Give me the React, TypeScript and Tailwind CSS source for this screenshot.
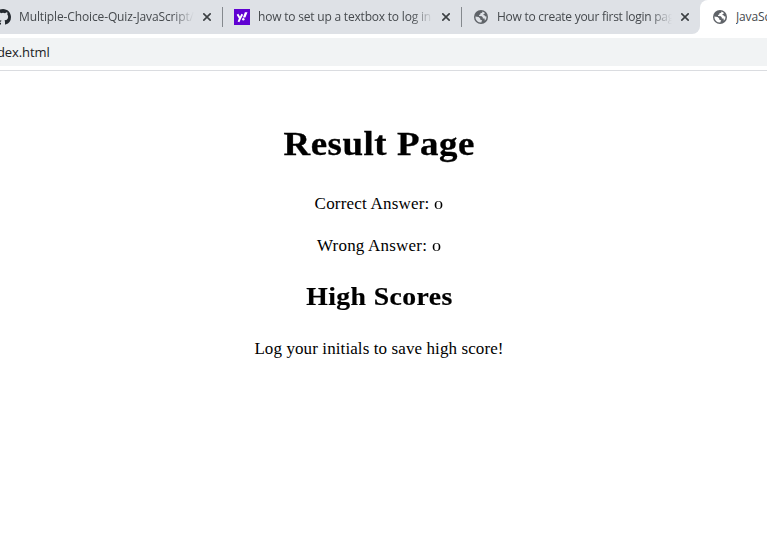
import React from "react";

function Globe({ land }: { land: string }) {
  return (
    <svg viewBox="0 0 14 14" className="h-[14px] w-[14px] shrink-0">
      <circle cx="7" cy="7" r="7" fill="#5f6368" />
      <path
        d="M8.4 1.5 8.2 2.7 6.4 3.3 6.3 4.6 5 5 5.2 6.1 7.7 6.2 8.7 7.2 8.8 8.4 10.6 8.6 10.8 10.8A5.7 5.7 0 0 0 12.6 6.4L11.6 6.6 10.8 5.5 9.4 5.1 9.6 4.1 11 3.6 10.4 2.4ZM1.4 6.5 4.6 6.9 6.2 8.4 6.2 9.5 8.2 10.4 7.6 11.5 7.4 12.6A5.6 5.6 0 0 1 1.4 6.5Z"
        fill={land}
      />
    </svg>
  );
}

function GitHub() {
  return (
    <svg viewBox="0 0 16 16" className="h-4 w-4 shrink-0" fill="#24292f">
      <path d="M8 0C3.58 0 0 3.58 0 8c0 3.54 2.29 6.53 5.47 7.59.4.07.55-.17.55-.38 0-.19-.01-.82-.01-1.49-2.01.37-2.53-.49-2.69-.94-.09-.23-.48-.94-.82-1.13-.28-.15-.68-.52-.01-.53.63-.01 1.08.58 1.23.82.72 1.21 1.87.87 2.33.66.07-.52.28-.87.51-1.07-1.78-.2-3.64-.89-3.64-3.95 0-.87.31-1.59.82-2.15-.08-.2-.36-1.02.08-2.12 0 0 .67-.21 2.2.82a7.6 7.6 0 0 1 4 0c1.53-1.04 2.2-.82 2.2-.82.44 1.1.16 1.92.08 2.12.51.56.82 1.27.82 2.15 0 3.07-1.87 3.75-3.65 3.95.29.25.54.73.54 1.48 0 1.07-.01 1.93-.01 2.2 0 .21.15.46.55.38A8 8 0 0 0 16 8c0-4.42-3.58-8-8-8Z" />
    </svg>
  );
}

function Yahoo() {
  return (
    <svg viewBox="0 0 16 16" className="h-4 w-4 shrink-0">
      <path fill="#6001d2" d="M0 0h16v16H0z" />
      <path
        d="M3.5 5.3 6 9.6 8.3 5.3M6 9.5 4.5 12.8"
        fill="none"
        stroke="#fff"
        strokeWidth="1.9"
      />
      <path d="M10.9 3.2h2.6l-2.1 5.2H8.9Z" fill="#fff" />
      <circle cx="9.3" cy="10.3" r="1.2" fill="#fff" />
    </svg>
  );
}

function Close() {
  return (
    <svg viewBox="0 0 8 8" className="h-2 w-2 shrink-0">
      <path d="M.3.3l7.4 7.4M7.7.3L.3 7.7" stroke="#3c4043" strokeWidth="1.6" />
    </svg>
  );
}

const label =
  "shrink-0 overflow-hidden whitespace-nowrap font-['Open_Sans','Noto_Sans',sans-serif] text-[12px] leading-[18px] text-[#45494d]";
const fade = "[mask-image:linear-gradient(to_right,#000_calc(100%-22px),transparent)]";

const zero =
  "inline-block origin-left scale-x-[1.45] text-[12.5px] leading-5";

export default function App() {
  return (
    <div className="h-[535px] w-[767px] overflow-hidden bg-white">
      <header className="border-b border-[#dadce0] pb-1">
        <div className="flex h-[34px] bg-white">
          <div className="flex h-full w-[700px] shrink-0 items-center rounded-br-lg bg-[#dee1e6]">
            <div className="-ml-[5px] flex"><GitHub /></div>
            <div className={`ml-2 w-[175px] tracking-[-0.13px] ${label} ${fade}`}>
              <span>Multiple-Choice-Quiz-JavaScript/</span>
            </div>
            <div className="ml-[9px] flex"><Close /></div>
            <div className="ml-[11px] h-5 w-px bg-[#85898e]" />
            <div className="ml-[11px] flex"><Yahoo /></div>
            <div className={`ml-2 w-[175px] tracking-[-0.2px] ${label} ${fade}`}>
              <span>how to set up a textbox to log in</span>
            </div>
            <div className="ml-[9px] flex"><Close /></div>
            <div className="ml-[11px] h-5 w-px bg-[#85898e]" />
            <div className="ml-3 flex"><Globe land="#dee1e6" /></div>
            <div className={`ml-[9px] w-[175px] tracking-[-0.26px] ${label} ${fade}`}>
              <span>How to create your first login pag</span>
            </div>
            <div className="ml-[9px] flex"><Close /></div>
          </div>
          <div className="flex min-w-0 flex-1 bg-[#dee1e6]">
            <div className="flex min-w-0 flex-1 items-center overflow-hidden rounded-tl-lg bg-white pl-[13px]">
              <Globe land="#ffffff" />
              <div className={`ml-[9px] tracking-[-0.15px] ${label}`}>
                <span>JavaSc</span>
              </div>
            </div>
          </div>
        </div>
        <div className="mt-1 flex h-7 items-center overflow-hidden bg-[#f1f3f4]">
          <div className="-ml-[3px] mt-px whitespace-nowrap font-['Open_Sans','Noto_Sans',sans-serif] text-[13px] tracking-[-0.1px] text-[#202124]">
            <span>dex.html</span>
          </div>
        </div>
      </header>
      <main className="flex flex-col items-center pr-[9px] pt-[53px] font-['Liberation_Serif',serif] text-black">
        <h1 className="h-10 scale-x-[1.085] whitespace-nowrap text-[34px] font-bold leading-10 tracking-[0.5px] [-webkit-text-stroke:0.3px_black]">
          <span>Result Page</span>
        </h1>
        <p className="mt-[30px] h-5 whitespace-nowrap pr-[3px] text-[17px] leading-5 tracking-[0.2px]">
          <span>Correct Answer: </span><span className={zero}>0</span>
        </p>
        <p className="mt-[22px] h-5 whitespace-nowrap pr-[3px] text-[17px] leading-5 tracking-[0.2px]">
          <span>Wrong Answer: </span><span className={zero}>0</span>
        </p>
        <h2 className="mt-[26px] h-[30px] scale-x-[1.085] whitespace-nowrap text-[25.5px] font-bold leading-[30px] tracking-[0.4px] [-webkit-text-stroke:0.2px_black]">
          <span>High Scores</span>
        </h2>
        <p className="mt-[27px] h-5 whitespace-nowrap text-[17px] leading-5 tracking-[0.1px]">
          <span>Log your initials to save high score!</span>
        </p>
      </main>
    </div>
  );
}
